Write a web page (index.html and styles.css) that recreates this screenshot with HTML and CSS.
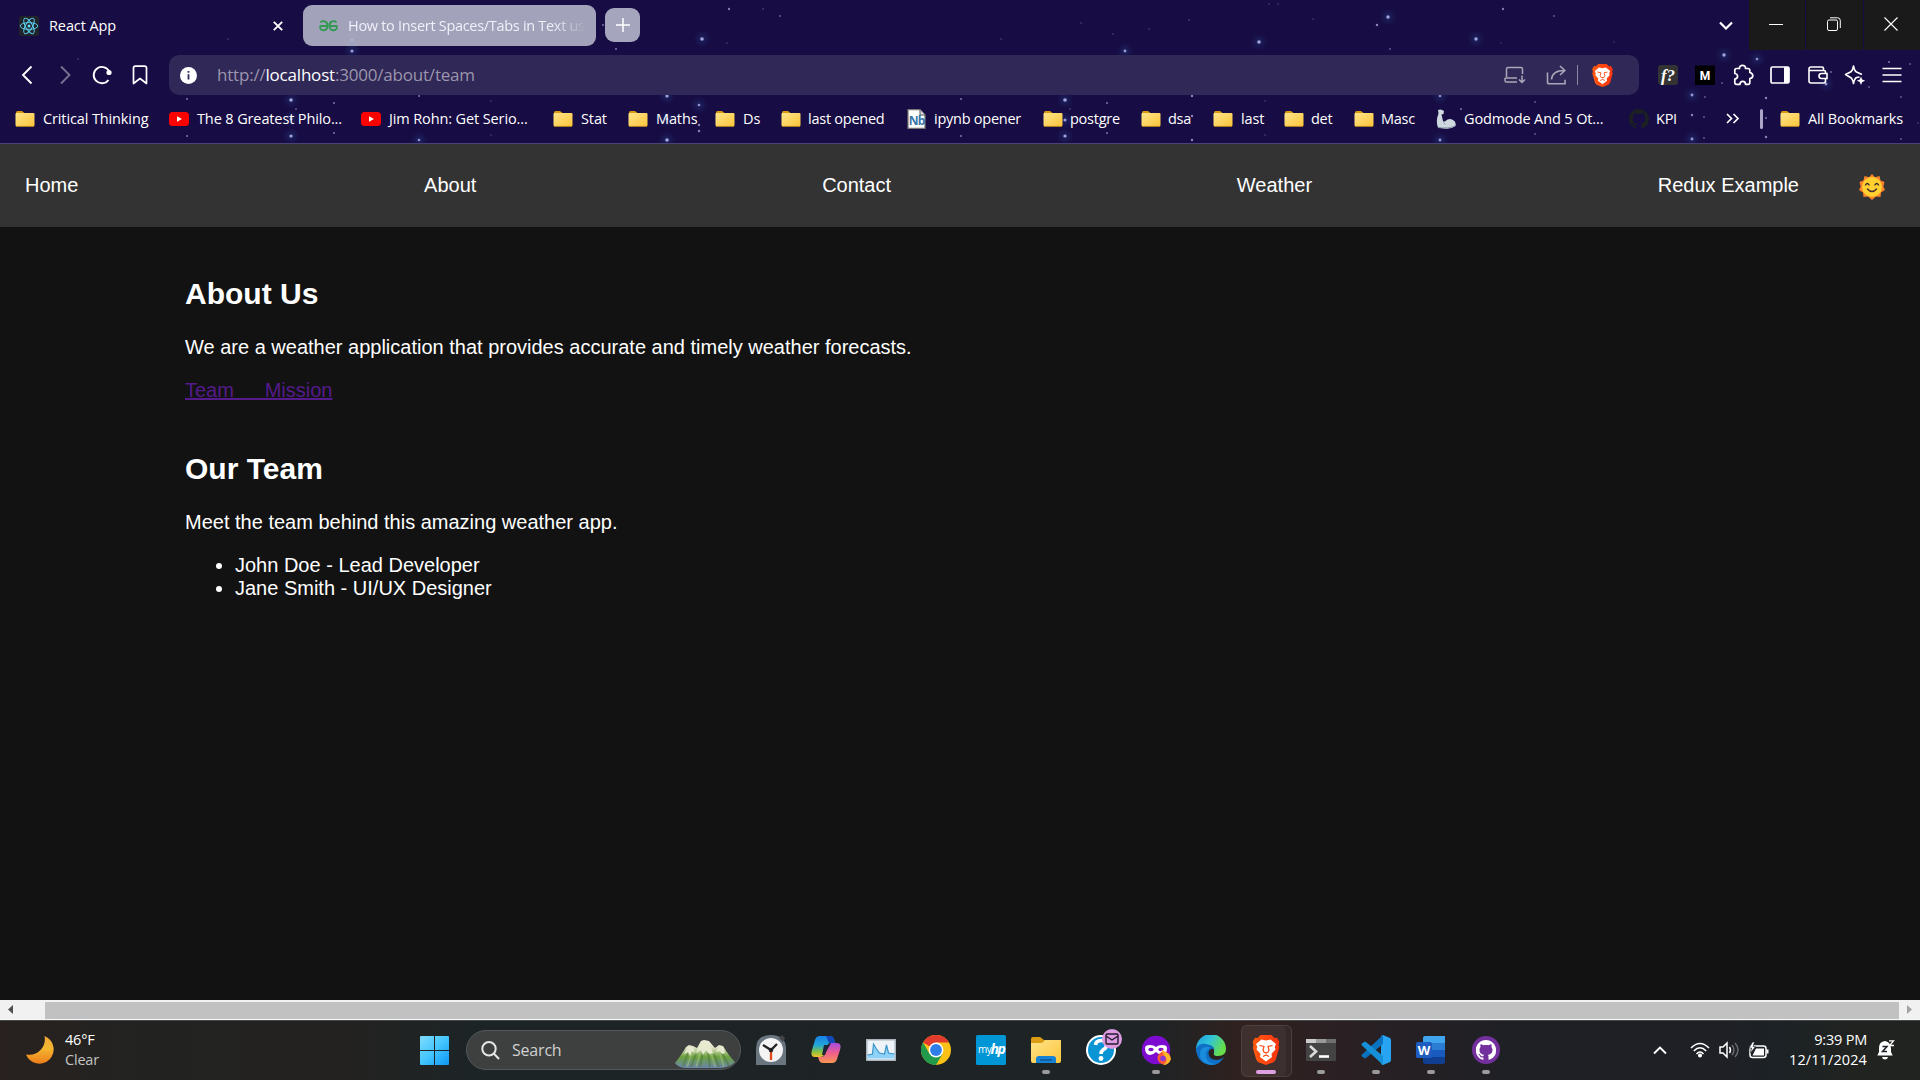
FILE: index.html
```html
<!DOCTYPE html>
<html lang="en">
<head>
<meta charset="utf-8">
<title>React App</title>
<link rel="stylesheet" href="styles.css">
</head>
<body>
<svg class="defs" width="0" height="0" aria-hidden="true">
  <defs>
    <linearGradient id="gFolder" x1="0" y1="0" x2="1" y2="1"><stop offset="0" stop-color="#ffe48a"/><stop offset="1" stop-color="#fcc53a"/></linearGradient>
    <linearGradient id="gBrave" x1="0" y1="0" x2="1" y2="0"><stop offset="0" stop-color="#ff5a10"/><stop offset="1" stop-color="#fb3310"/></linearGradient>
    <linearGradient id="gWin" gradientUnits="userSpaceOnUse" x1="0" y1="0" x2="29" y2="29"><stop offset="0" stop-color="#80dcff"/><stop offset=".5" stop-color="#43c5fd"/><stop offset="1" stop-color="#0e96f5"/></linearGradient>
    <linearGradient id="gMoon" x1="0" y1="0" x2="0" y2="1"><stop offset="0" stop-color="#f5a53a"/><stop offset=".45" stop-color="#f3b72f"/><stop offset="1" stop-color="#ee7c1c"/></linearGradient>
    <radialGradient id="gStar"><stop offset="0" stop-color="#3a78d0" stop-opacity=".22"/><stop offset="1" stop-color="#2a5ab0" stop-opacity="0"/></radialGradient>
    <symbol id="folder" viewBox="0 0 20 16"><path d="M1 1.500Q1 0 2.500 0H7l2.500 2H18v6H1z" fill="#d99a12"/><path d="M0.500 3Q.5 2 1.500 2H18.500Q19.500 2 19.500 3V14Q19.500 15.500 18 15.500H2Q.5 15.500.5 14z" fill="url(#gFolder)"/><path d="M1 15.400H19" stroke="#b98718" stroke-width=".8"/></symbol>
    <symbol id="yt" viewBox="0 0 20 14"><rect width="20" height="14" rx="3.500" fill="#f00"/><path d="M8 4.200L13 7l-5 2.800z" fill="#fff"/></symbol>
    <symbol id="lion" viewBox="0 0 27 30"><path d="M8 0H19L22 3l2.500-.3L27 7l-1 3 .8 2.500-3.500 12Q22.500 26.500 20.500 27.500L13.500 30 6.500 27.500Q4.500 26.500 3.700 24.500L.2 12.500 1 10 0 7 2.500 2.700 5 3z" fill="url(#gBrave)"/><path d="M9 4.500l4.500 1 4.500-1L23.500 9l-1.300 3 .8 2.500-4 4.300L19.500 22 13.500 26.500 7.500 22l.5-3.200-4-4.300.8-2.500L3.500 9z" fill="#fff"/><path d="M7 10.500l4.500 1-1 3.500 1.500 3M20 10.500l-4.500 1 1 3.500-1.500 3M10.500 21.500L13.500 20l3 1.500" fill="none" stroke="#fb4a18" stroke-width="1.200"/><path d="M11.800 17h3.400l-1.700 2z" fill="#fb4a18"/></symbol>
    <symbol id="cat" viewBox="0 0 16 16"><path fill-rule="evenodd" d="M8 0C3.580 0 0 3.580 0 8c0 3.540 2.290 6.530 5.470 7.590.4.070.55-.17.55-.38 0-.19-.01-.82-.01-1.490-2.010.37-2.530-.49-2.690-.94-.09-.23-.48-.94-.82-1.130-.28-.15-.68-.52-.01-.53.63-.01 1.080.58 1.230.82.72 1.210 1.870.87 2.330.66.070-.52.280-.87.510-1.070-1.780-.2-3.640-.89-3.640-3.950 0-.87.310-1.590.82-2.150-.08-.2-.36-1.020.08-2.120 0 0 .67-.21 2.200.82.640-.18 1.320-.27 2-.27s1.360.09 2 .27c1.530-1.040 2.200-.82 2.200-.82.440 1.100.160 1.920.080 2.120.510.560.820 1.270.820 2.150 0 3.070-1.870 3.750-3.650 3.950.290.250.540.730.540 1.480 0 1.070-.01 1.930-.01 2.200 0 .210.150.460.550.380A8.010 8.010 0 0 0 16 8c0-4.420-3.580-8-8-8z"/></symbol>
  </defs>
</svg>

<header class="browser">
  <svg class="sky" id="sky" width="1920" height="143" aria-hidden="true"></svg>
  <div class="tabs">
    <div class="tab active">
      <svg width="20" height="20" viewBox="0 0 20 20"><rect width="20" height="20" rx="2" fill="#20232a"/><g fill="none" stroke="#61dafb" stroke-width=".9"><ellipse cx="10" cy="10" rx="8.800" ry="3.400"/><ellipse cx="10" cy="10" rx="8.800" ry="3.400" transform="rotate(60 10 10)"/><ellipse cx="10" cy="10" rx="8.800" ry="3.400" transform="rotate(120 10 10)"/></g><circle cx="10" cy="10" r="1.500" fill="#61dafb"/></svg>
      <span class="tab-title">React App</span>
      <svg class="close" width="10" height="10" viewBox="0 0 10 10"><path d="M.8.8l8.400 8.400M9.200.8L.8 9.200" stroke="#fff" stroke-width="1.900"/></svg>
    </div>
    <div class="tab idle">
      <svg width="19" height="12" viewBox="0 0 19 12"><g fill="none" stroke="#2f9a50" stroke-width="1.900"><path d="M.5 6H8.500C9 1 3 0 1.500 2.500M8.500 6C8.500 11 1.500 12 1 7"/><path d="M18.500 6H10.500C10 1 16 0 17.500 2.500M10.500 6C10.500 11 17.500 12 18 7"/></g></svg>
      <span class="tab-title">How to Insert Spaces/Tabs in Text us</span>
    </div>
    <div class="new-tab"><svg width="14" height="14" viewBox="0 0 14 14"><path d="M7 0v14M0 7h14" stroke="#fff" stroke-width="1.500"/></svg></div>
    <svg class="tab-search" width="14" height="9" viewBox="0 0 14 9"><path d="M1 1.500l6 6 6-6" fill="none" stroke="#fff" stroke-width="2.200"/></svg>
    <div class="win-buttons">
      <span><svg width="14" height="14" viewBox="0 0 14 14"><path d="M0 7.500h14" stroke="#fff"/></svg></span>
      <span><svg width="14" height="14" viewBox="0 0 14 14" fill="none" stroke="#fff"><rect x=".5" y="3" width="10" height="10.500" rx="1.500"/><path d="M3 .8h7.500Q13.300.8 13.300 3.500V11"/></svg></span>
      <span><svg width="14" height="14" viewBox="0 0 14 14"><path d="M.5.5l13 13M13.500.5l-13 13" stroke="#fff" stroke-width="1.100"/></svg></span>
    </div>
  </div>

  <div class="toolbar">
    <div class="nav-icons">
      <svg width="20" height="20" viewBox="0 0 20 20"><path d="M14.500 1.500L6 10l8.500 8.500" fill="none" stroke="#fff" stroke-width="1.900"/></svg>
      <svg width="20" height="20" viewBox="0 0 20 20"><path d="M6 1.500L14.500 10 6 18.500" fill="none" stroke="#77718f" stroke-width="1.900"/></svg>
      <svg width="20" height="20" viewBox="0 0 20 20"><path d="M16.500 15A8.200 8.200 0 1 1 17.500 7" fill="none" stroke="#fff" stroke-width="1.900"/><circle cx="17" cy="7.500" r="2.600" fill="#fff"/></svg>
      <svg width="20" height="20" viewBox="0 0 20 20"><path d="M3.500 3Q3.500 1.200 5.300 1.200H14.700Q16.500 1.200 16.500 3V18.500L10 13.500 3.500 18.500z" fill="none" stroke="#fff" stroke-width="1.700" stroke-linejoin="round"/></svg>
    </div>
    <div class="address">
      <svg width="17" height="17" viewBox="0 0 17 17"><circle cx="8.500" cy="8.500" r="8.500" fill="#fff"/><path d="M8.500 7.300v5.200M8.500 4v1.800" stroke="#302856" stroke-width="1.800"/></svg>
      <span class="url">http://<b>localhost</b>:3000/about/team</span>
      <div class="address-actions">
        <svg width="22" height="18" viewBox="0 0 22 18" fill="none" stroke="#aaa5b8" stroke-width="1.500"><path d="M2.500 11V3Q2.500 1.500 4 1.500H17Q18.500 1.500 18.500 3V8M1 12h12M1 12v2.500Q1 16 2.500 16H13M18 9.500v6.500M15 13.500l3 3 3-3"/></svg>
        <svg width="21" height="20" viewBox="0 0 21 20" fill="none" stroke="#aaa5b8" stroke-width="1.600"><path d="M1.500 7.500V17Q1.500 18.800 3.300 18.800H19v-4M5.500 14.500C6 8.500 10 5.500 18.500 5.500M14 1l4.800 4.500L14 10"/></svg>
        <i class="divider"></i>
        <svg width="21" height="23"><use href="#lion"/></svg>
      </div>
    </div>
    <div class="extensions">
      <svg width="22" height="22" viewBox="0 0 22 22"><rect x="1" y="1" width="20" height="20" rx="3" fill="#333"/><text x="11" y="16.500" text-anchor="middle" class="t-f">f?</text></svg>
      <svg width="22" height="22" viewBox="0 0 22 22"><rect x="1" y="1.500" width="20" height="19.500" fill="#000"/><text x="11" y="15.500" text-anchor="middle" class="t-m">M</text></svg>
      <svg width="22" height="22" viewBox="0 0 22 22"><path d="M4.500 4.500H7.500C7 .3 14 .3 13.500 4.500H16Q17.800 4.500 17.800 6.300V8.500C21.800 9.500 21.800 14 17.800 14.500V18.700Q17.800 20.300 16 20.300H13.500C13.500 16.500 8 16.500 8 20.300H4.500Q2.800 20.300 2.800 18.500V15C6.500 14.500 6.500 10 2.800 9.500V6.300Q2.800 4.500 4.500 4.500z" fill="none" stroke="#fff" stroke-width="1.700" stroke-linejoin="round"/></svg>
      <svg width="22" height="22" viewBox="0 0 22 22"><rect x="2" y="3" width="18" height="16" rx="1.500" fill="none" stroke="#fff" stroke-width="1.700"/><path d="M15 3h5v16h-5z" fill="#fff"/></svg>
      <svg width="22" height="22" viewBox="0 0 22 22" fill="none" stroke="#fff" stroke-width="1.600"><path d="M18.500 10V8Q18.500 6.500 17 6.500H2M16.500 6.500V4.500Q16.500 3 15 3H4Q2 3 2 5V17Q2 19 4 19H16.500Q18.500 19 18.500 17V15"/><path d="M20 9.500H14.500Q12 9.500 12 12T14.500 14.500H20z"/></svg>
      <svg width="22" height="22" viewBox="0 0 22 22"><path d="M15.500 13L12.500 13.500Q10.500 14.500 9.500 19.500 8.500 14.500 6.500 13.500L1.500 10.500 6.500 8Q8.500 7 9.500 2 10.500 7 12.500 8L18 10.500" fill="none" stroke="#fff" stroke-width="1.600" stroke-linejoin="round"/><path d="M17 12.500l1.200 3 3 1.200-3 1.200-1.200 3-1.200-3-3-1.200 3-1.200z" fill="#fff"/></svg>
      <svg width="22" height="22" viewBox="0 0 22 22"><path d="M1.500 4.500h19M1.500 11h19M1.500 17.500h19" stroke="#fff" stroke-width="1.700"/></svg>
    </div>
  </div>

  <div class="bookmarks">
    <span class="bm"><svg width="20" height="16"><use href="#folder"/></svg>Critical Thinking</span>
    <span class="bm"><svg width="20" height="14"><use href="#yt"/></svg>The 8 Greatest Philo...</span>
    <span class="bm"><svg width="20" height="14"><use href="#yt"/></svg>Jim Rohn: Get Serio...</span>
    <span class="bm"><svg width="20" height="16"><use href="#folder"/></svg>Stat</span>
    <span class="bm"><svg width="20" height="16"><use href="#folder"/></svg>Maths</span>
    <span class="bm"><svg width="20" height="16"><use href="#folder"/></svg>Ds</span>
    <span class="bm snug"><svg width="20" height="16"><use href="#folder"/></svg>last opened</span>
    <span class="bm snug"><svg width="20" height="20" viewBox="0 0 20 20"><path d="M1 .7H13L18 6V19.300H1z" fill="#fff" stroke="#777" stroke-width="1.200"/><path d="M13 .7V6h5" fill="#ddd" stroke="#555"/><text x="9.700" y="16" text-anchor="middle" class="t-nb">Nb</text></svg>ipynb opener</span>
    <span class="bm snug"><svg width="20" height="16"><use href="#folder"/></svg>postgre</span>
    <span class="bm snug"><svg width="20" height="16"><use href="#folder"/></svg>dsa</span>
    <span class="bm"><svg width="20" height="16"><use href="#folder"/></svg>last</span>
    <span class="bm snug"><svg width="20" height="16"><use href="#folder"/></svg>det</span>
    <span class="bm snug"><svg width="20" height="16"><use href="#folder"/></svg>Masc</span>
    <span class="bm"><svg width="20" height="20" viewBox="0 0 20 20"><path d="M2 1Q5-.5 8 2L7.500 5 5.500 5.500 7 12Q8 13 9.500 12 13 8.500 17 11 20.500 13 19.500 17 15 20.500 8 19.500L2 18.500Q-.5 12 2.500 4.500z" fill="#cdd9df"/><path d="M7.500 13.500l2 2M2 18.500Q12 20 19 17" stroke="#8799a3" fill="none"/></svg>Godmode And 5 Ot...</span>
    <span class="bm snug"><svg width="20" height="20" fill="#1b2023"><use href="#cat"/></svg>KPI</span>
    <svg width="14" height="11" viewBox="0 0 14 11"><path d="M1 1l4.500 4.500L1 10M7.500 1L12 5.500 7.500 10" fill="none" stroke="#fff" stroke-width="1.700"/></svg>
    <i class="bm-divider"></i>
    <span class="bm"><svg width="20" height="16"><use href="#folder"/></svg>All Bookmarks</span>
  </div>
</header>

<main class="page">
  <nav class="site-nav">
    <div class="links"><a>Home</a><a>About</a><a>Contact</a><a>Weather</a><a>Redux Example</a></div>
    <svg class="sun" width="26" height="26" viewBox="0 0 26 26"><path d="M13 0l3 3.300 4.500-1.300 1 4.500L25.500 8l-1.200 4.500L26 16l-4 2.500-.5 4.500-4.500-.5L13 26l-4-3.500-4.500.5L4 18.500 0 16l1.700-3.500L.5 8l4-1.500 1-4.500L10 3.300z" fill="#ff822d"/><circle cx="13" cy="13" r="10" fill="#ffd02f"/><path d="M6.500 11q1.800-3 3.600 0M15.900 11q1.800-3 3.600 0M8.500 15q4.500 5 9 0" fill="none" stroke="#402a32" stroke-width="1.400" stroke-linecap="round"/></svg>
  </nav>
  <section class="content">
    <h2>About Us</h2>
    <p>We are a weather application that provides accurate and timely weather forecasts.</p>
    <a class="sublinks">Team&nbsp;&nbsp;&nbsp;&nbsp;&nbsp;Mission</a>
    <h2 class="team">Our Team</h2>
    <p>Meet the team behind this amazing weather app.</p>
    <ul><li>John Doe - Lead Developer</li><li>Jane Smith - UI/UX Designer</li></ul>
  </section>
</main>

<div class="scrollbar">
  <svg width="21" height="18" viewBox="0 0 21 18"><path d="M13 4v9L8 8.500z" fill="#505050"/></svg>
  <div class="thumb"></div>
  <svg width="21" height="18" viewBox="0 0 21 18"><path d="M8 4v9l5-4.500z" fill="#a3a3a3"/></svg>
</div>

<footer class="taskbar">
  <div class="weather">
    <svg width="28" height="28" viewBox="0 0 28 28"><path d="M18.500 0A14.300 14.300 0 1 1 0 18.500Q9 20 15 13.500 20 8 18.500 0z" fill="url(#gMoon)"/></svg>
    <div><div>46°F</div><div class="dim">Clear</div></div>
  </div>
  <div class="center">
    <svg class="start" width="29" height="29" viewBox="0 0 29 29" fill="url(#gWin)"><path d="M0 1Q0 0 1 0H14V14H0zM15 0H28Q29 0 29 1V14H15zM0 15H14V29H1Q0 29 0 28zM15 15H29V28Q29 29 28 29H15z"/></svg>
    <div class="search">
      <svg width="19" height="19" viewBox="0 0 19 19" fill="none" stroke="#e6e6e6" stroke-width="2"><circle cx="8" cy="7.800" r="6.700"/><path d="M12.800 12.500l5.200 5.500"/></svg>
      <span>Search</span>
      <svg class="mountains" width="60" height="28" viewBox="0 0 60 28">
        <defs><linearGradient id="gMt" x1="0" y1="0" x2="0" y2="1"><stop offset="0" stop-color="#f3f0df"/><stop offset=".28" stop-color="#dfe2c4"/><stop offset=".6" stop-color="#6da23f"/><stop offset="1" stop-color="#6a83ad"/></linearGradient></defs>
        <path d="M0 23Q7 14 11 7L14 5 18 6 22 8 26 1 29 0 34 1 40 8 44 5 48 6Q54 16 60 22 56 27 46 28H12Q3 28 0 23z" fill="url(#gMt)"/>
        <path d="M13 13l-5 13M21 14l-5 13M28 12l-3 15M33 12l2 15M39 14l5 13M47 13l7 13" stroke="#47752f" stroke-width="2" opacity=".5"/><path d="M17 13l-5 14M25 14l-4 13M36 13l4 14M45 14l4 13" stroke="#a9c979" stroke-width="1.500" opacity=".5"/><path d="M26 2l-5 11 5-3 2 5 3-5 3 4 4-1-4-11zM13 7l-4 7 4-2 2 4 2-5 3 2-2-6zM44 7l-3 5 4-1 2 3 3-1-2-6z" fill="#e8ead0"/>
      </svg>
    </div>
    <div class="apps">
      <span class="app"><svg viewBox="0 0 30 30"><path d="M0 14Q0 0 15 0T30 14V30H0z" fill="#697680"/><path d="M23 3l3-3 3 3-2 4z" fill="#454545"/><circle cx="15" cy="15" r="12" fill="#f4f4f4"/><path d="M7 10l8 5 6-6" fill="none" stroke="#222" stroke-width="2.300"/><path d="M15 15v10" stroke="#e04716" stroke-width="2.300"/><circle cx="15" cy="15" r="2.300" fill="#222"/></svg></span>
      <span class="app"><svg viewBox="0 0 30 30"><defs><linearGradient id="gC1" x1="0" y1="0" x2="0" y2="1"><stop offset="0" stop-color="#1781e8"/><stop offset=".45" stop-color="#24a8d5"/><stop offset=".75" stop-color="#86c33f"/><stop offset="1" stop-color="#f5c12b"/></linearGradient><linearGradient id="gC2" x1="0" y1="0" x2="0" y2="1"><stop offset="0" stop-color="#a74bdf"/><stop offset=".5" stop-color="#ee5f8d"/><stop offset="1" stop-color="#fa9550"/></linearGradient></defs><path d="M9 1H19Q22 1 23 4L24 8H20Q17 8 16 11L13 20Q12 22 9 22H4Q-1 22 1 15L4 5Q5 1 9 1z" fill="url(#gC1)"/><path d="M15 1H19Q22 1 23 4L24 8H18z" fill="#1447b7"/><path d="M20 8H26Q31 8 29 15L26 24Q25 28 21 28H12Q9 28 8 25L7 22H10Q13 22 14 19z" fill="url(#gC2)"/><path d="M13 10h4l-3 10h-3z" fill="#20263a"/></svg></span>
      <span class="app"><svg viewBox="0 0 30 30"><path d="M0 4H30V26H0z" fill="#a9b4bd"/><path d="M1.500 5.500H28.500V24.500H1.500z" fill="#eef3f7"/><path d="M1.500 20l5-1 1-10 3 5 3 4 5 1 2-9 2 8 6 1v4.500H1.500z" fill="#8ed2f8"/><path d="M1.500 20l5-1 1-10 3 5 3 4 5 1 2-9 2 8 6 1" fill="none" stroke="#3b94c9" stroke-width="1.200"/></svg></span>
      <span class="app"><svg viewBox="0 0 30 30"><circle cx="15" cy="15" r="15" fill="#fbc116"/><path d="M15 15L2 7.500A15 15 0 0 1 28 7.500H15z" fill="#e33b2e"/><path d="M2 7.500A15 15 0 0 0 15 30L21.500 18.800 8.500 18.800z" fill="#229a4b"/><circle cx="15" cy="15" r="7.400" fill="#fff"/><circle cx="15" cy="15" r="5.900" fill="#2f7de9"/></svg></span>
      <span class="app"><svg viewBox="0 0 30 30"><rect width="30" height="30" rx="1.500" fill="#0096d6"/><text x="2" y="17.500" class="t-my">my</text><text x="14.500" y="18.500" class="t-hp">hp</text></svg></span>
      <span class="app run"><svg viewBox="0 0 30 30"><path d="M0 4Q0 2 2 2H9L13 5H30V12H0z" fill="#dc9c13"/><path d="M0 8H11L14 5H29Q30 5 30 6V26Q30 28 28 28H2Q0 28 0 26z" fill="url(#gFolder)"/><path d="M5 28V24Q5 21 8 21H22Q25 21 25 24V28z" fill="#1682d4"/><path d="M9 25h12" stroke="#0d5698" stroke-width="1.500"/></svg></span>
      <span class="app"><svg viewBox="0 0 30 30"><circle cx="15" cy="15" r="14" fill="#0a94d4" stroke="#fff" stroke-width="2"/><path d="M9.500 10Q10 5.500 15 5.500 20.500 5.500 20.500 10 20.500 13 17.500 14.500 15 16 15 19" fill="none" stroke="#fff" stroke-width="3.600"/><circle cx="15" cy="23.500" r="2.400" fill="#fff"/></svg><i class="badge"><svg width="14" height="12" viewBox="0 0 14 12" fill="none" stroke="#251a2a" stroke-width="1.400"><rect x="1" y="1" width="12" height="10" rx="1"/><path d="M1 3l6 4 6-4"/></svg></i></span>
      <span class="app run"><svg viewBox="0 0 30 30"><circle cx="15" cy="15" r="14.300" fill="#7e0bd0"/><path d="M4 13Q4 10 9 10 13 10 15 12 17 10 21 10 26 10 26 13 26 20 21 20 18 20 15 17 12 20 9 20 4 20 4 13z" fill="#fff"/><ellipse cx="10" cy="14.500" rx="2.700" ry="1.800" fill="#7e0bd0"/><ellipse cx="20" cy="14.500" rx="2.700" ry="1.800" fill="#7e0bd0"/><circle cx="23" cy="23" r="6.500" fill="#ff5a36"/><path d="M20 14Q24 17 28 19L30 24Q28 30 22 30 28 26 24 22z" fill="#ffb52b"/><circle cx="22" cy="23.500" r="2.800" fill="#8a3ad5"/></svg></span>
      <span class="app"><svg viewBox="0 0 30 30"><defs><linearGradient id="gE" x1="0" y1="0" x2="1" y2=".4"><stop offset="0" stop-color="#1c9ce0"/><stop offset=".5" stop-color="#31c4d8"/><stop offset="1" stop-color="#66de4b"/></linearGradient></defs><path d="M0 14A15 15 0 0 1 30 14Q30 21 22 21 17 21 18 18 19 10 11 10 3 10 0 17z" fill="url(#gE)"/><path d="M0 14Q3 8 10 9 17 10 18.500 14 14 13 12.500 17 12 25 21 25 25 25 28 22 23 31 14 30 1 28 0 14z" fill="#0f6fc6"/><path d="M12.500 14Q9 17 10 22 12 29 20 29 13 31 7 27 2 21 5 15 8 11 14 12z" fill="#1a8cdc"/></svg></span>
      <span class="app run current"><svg viewBox="0 0 30 30"><use href="#lion" x="1.500" y="0" width="27" height="30"/></svg></span>
      <span class="app run"><svg viewBox="0 0 30 30"><path d="M0 5Q0 4 1 4H29Q30 4 30 5V26H0z" fill="#444"/><path d="M0 4H10V8H0z" fill="#ccc"/><path d="M10 4H20V8H10z" fill="#999"/><path d="M20 4H30V8H20z" fill="#707070"/><path d="M4 11l6 5.500L4 22" fill="none" stroke="#dcdcdc" stroke-width="2.600"/><path d="M13 21.500h10" stroke="#fff" stroke-width="2.600"/></svg></span>
      <span class="app run"><svg viewBox="0 0 30 30"><path d="M22 0L29 3Q30 4 30 5V25Q30 26 29 27L22 30 20 29V1z" fill="#27a4f2"/><path d="M22 0L1 19.500Q0 20.500 1 21.500L3 23Q4 23.500 5 23L22 9z" fill="#0b72bf"/><path d="M22 30L1 10.500Q0 9.500 1 8.500L3 7Q4 6.500 5 7L22 21z" fill="#168fd9"/></svg></span>
      <span class="app run"><svg viewBox="0 0 30 30"><path d="M7 3Q7 1 9 1H29V8H7z" fill="#41a5ee"/><path d="M7 8H29V15H7z" fill="#2b7cd3"/><path d="M7 15H29V22H7z" fill="#185abd"/><path d="M7 22H29V27Q29 29 27 29H9Q7 29 7 27z" fill="#103f91"/><rect y="7" width="16" height="16" rx="1.500" fill="#1f5cc0"/><text x="8" y="19.500" text-anchor="middle" class="t-w">W</text></svg></span>
      <span class="app run"><svg viewBox="0 0 30 30"><circle cx="15" cy="15" r="14" fill="#73309d"/><g transform="translate(4.800 5) scale(1.270)" fill="#fff"><use href="#cat" width="16" height="16"/></g></svg></span>
    </div>
  </div>
  <div class="tray">
    <svg width="14" height="9" viewBox="0 0 14 9"><path d="M1 7.500l6-6 6 6" fill="none" stroke="#fff" stroke-width="1.900"/></svg>
    <svg class="wifi" width="20" height="16" viewBox="0 0 20 16" fill="none" stroke="#fff" stroke-width="1.500"><path d="M1 6Q10-3 19 6M3.800 9Q10 2.500 16.200 9M6.500 12Q10 8 13.500 12"/><circle cx="10" cy="13.500" r="1.300" fill="#fff"/></svg>
    <svg class="snd" width="21" height="18" viewBox="0 0 21 18" fill="none" stroke="#fff" stroke-width="1.500"><path d="M1 6H4L8 2V16L4 12H1zM10.500 6Q12.500 9 10.500 12"/><path d="M13 4Q17 9 13 14M16 2Q22 9 16 16" stroke="#666a70"/></svg>
    <svg class="bat" width="20" height="17" viewBox="0 0 20 17"><rect x="1" y="4" width="16" height="11.500" rx="2.500" fill="none" stroke="#fff" stroke-width="1.500"/><path d="M3.500 13.500L7 6.500h8v7zM17.500 7.500h2v4h-2z" fill="#fff"/><path d="M3.500 0L0 6h2.500L1.500 11l5-6.500H4L5.500 0z" fill="#fff" stroke="#1e2225" stroke-width=".6"/></svg>
    <div class="clock"><div>9:39 PM</div><div class="date">12/11/2024</div></div>
    <svg class="bell" width="18" height="20" viewBox="0 0 18 20"><path d="M8 1Q2 1.500 2 8V12L.3 15.500H15.700L14 12V8Q13 1.500 8 1z" fill="#fff"/><path d="M5 17H11Q10.500 19.500 8 19.500T5 17z" fill="#fff"/><path d="M5.500 6.500h4.500l-4.500 5H10" fill="none" stroke="#1e2225" stroke-width="1.500"/><path d="M12 .8h4.500L12.500 5.500H17" fill="none" stroke="#fff" stroke-width="1.300"/></svg>
  </div>
</footer>
<script src="stars.js"></script>
</body>
</html>
```
FILE: stars.js
```js
// Theme background: [x, y, radius]; bright stars also get a halo.
const stars = [
  [352,22,1.2],[352,40,1.5],[352,51,1.7],[228,39,.8],[78,59,.8],[187,99,1.2],[291,100,2],[296,109,1],[291,119,1.6],[334,103,1.2],[334,133,1.2],[291,136,1.8],[187,136,1.2],
  [419,96,1.2],[419,140,1.5],[491,101,.8],[491,135,.8],[616,49,1.2],[603,25,1.2],[729,9,1.3],[763,9,.9],[780,16,1],[702,39,2],[727,43,.8],[1001,39,.8],
  [1081,23,.8],[1125,51,1.6],[1113,34,.8],[1149,29,.8],[1189,20,.9],[1259,42,2],[1269,4,.8],[1278,4,.8],[667,96,1.8],[699,105,1.5],[699,125,1.4],[699,131,1.4],
  [667,119,1.5],[667,140,2],[961,99,1.2],[961,136,1.2],[1065,100,2],[1065,120,1.7],[1065,136,1.8],[1107,103,1.2],[1107,133,1.2],[1107,123,1.2],[1070,109,.9],[1192,96,1.4],[1192,116,1.4],
  [1192,140,1.4],[1265,101,.8],[1265,135,.8],[1388,17,1.9],[1377,25,1.4],[1313,19,.8],[1390,49,1],[1476,39,1.9],[1503,9,1.3],[1554,16,1],[1501,43,.7],[1614,42,.7],
  [1724,55,1.9],[1757,59,1.5],[1722,83,1],[1692,95,1.6],[1705,97,1],[1692,115,1.4],[1704,117,1],[1692,139,1.6],[1704,138,1],[1831,72,1.1],[1826,84,1.6],[1889,62,1.2],
  [1910,64,1],[1869,87,1],[1766,98,1.4],[1901,97,1],[1766,118,1.2],[1766,137,1.4],[1901,139,1],[1918,123,.8],[1440,96,1.5],[1440,140,1.6],[1461,109,1.2],[1535,102,1],[1535,134,1]
];
document.getElementById("sky").innerHTML = stars.map(([x, y, r]) =>
  (r >= 1.5 ? `<circle cx="${x}" cy="${y}" r="9" fill="url(#gStar)"/>` : "") +
  `<circle cx="${x}" cy="${y}" r="${r * .9}" fill="#b9bdf0" opacity="${Math.min(.85, r * .48)}"/>`
).join("");
```
FILE: styles.css
```css
* { box-sizing: border-box; }
body { margin: 0; width: 1920px; height: 1080px; overflow: hidden; display: flex; flex-direction: column; background: #121212; color: #fff; font-family: "Open Sans", "Noto Sans", sans-serif; }
svg { display: block; flex: none; }
.defs { position: absolute; }

.browser { position: relative; height: 144px; background: #170c43; border-bottom: 1px solid #4b4374; flex: none; }
.sky { position: absolute; left: 0; top: 0; }
.tabs, .toolbar, .bookmarks { position: relative; }

.tabs { height: 51px; display: flex; align-items: flex-start; font-size: 14.5px; letter-spacing: -.3px; }
.tab { display: flex; align-items: center; height: 41px; margin-top: 5px; }
.tab.active { width: 303px; padding: 0 20px 0 19px; letter-spacing: -.1px; }
.tab-title { white-space: nowrap; overflow: hidden; }
.active .tab-title { margin-left: 10px; flex: 1; }
.idle { width: 293px; padding: 0 10px 0 16px; border-radius: 9px; background: rgba(190, 192, 210, .84); }
.idle .tab-title { margin-left: 10px; color: #f0f0fa; flex: 1; -webkit-mask-image: linear-gradient(90deg, #000 86%, transparent); mask-image: linear-gradient(90deg, #000 86%, transparent); }
.new-tab { width: 35px; height: 34px; margin: 8px 0 0 9px; border-radius: 9px; background: #a5a6bd; display: grid; place-items: center; }
.tab-search { margin: 21px 0 0 1079px; }
.win-buttons { display: grid; grid-template-columns: 56px 57px 56px; gap: 1px; margin-left: auto; height: 50px; }
.win-buttons span { background: #1a1a1a; display: grid; place-items: center; padding: 0 2px 2px 0; }

.toolbar { height: 48px; padding-top: 4px; display: flex; }
.nav-icons { width: 169px; height: 40px; padding-left: 17px; display: flex; align-items: center; gap: 17.6px; }
.address { width: 1470px; height: 40px; border-radius: 10px; background: #302856; display: flex; align-items: center; padding: 0 26px 0 11px; }
.url { margin: -2px 0 0 20px; font-size: 17px; letter-spacing: -.2px; color: #9b96ad; white-space: nowrap; }
.url b { font-weight: 400; color: #fff; }
.address-actions { margin-left: auto; display: flex; align-items: center; }
.address-actions svg:nth-child(2) { margin-left: 20px; }
.divider { width: 1px; height: 20px; background: #8d88a0; margin: 0 14px 0 10px; }
.extensions { height: 40px; margin-left: 18px; display: flex; align-items: center; gap: 15.4px; }
.t-f { font: italic bold 17px "Liberation Serif", serif; fill: #fff; }
.t-m { font: bold 12px Roboto, sans-serif; fill: #fff; }

.bookmarks { height: 40px; padding-left: 15px; display: grid; grid-template-columns: 154px 192px 192px 75px 87px 66px 126px 136px 98px 72px 71px 70px 82px 193px 97px 34px 20px 1fr; align-items: center; font-size: 14.5px; letter-spacing: -.12px; white-space: nowrap; padding-bottom: 1px; }
.bm { display: flex; align-items: center; gap: 8px; }
.snug { gap: 7px; letter-spacing: -.25px; }
.bm-divider { width: 3px; height: 20px; border-radius: 2px; background: #aaa6c4; }
.t-nb { font: bold 12px "Open Sans", sans-serif; fill: #3776ab; letter-spacing: -.8px; }

.page { height: 856px; flex: none; font: 20px/23px "Liberation Sans", Arial, sans-serif; background: #121212; }
.site-nav { height: 83px; background: #333; display: flex; align-items: center; padding: 0 35px 0 25px; }
.links { width: 1774px; display: flex; justify-content: space-between; }
.sun { margin: 3px 0 0 60px; }
.content { padding: 50px 185px 0; }
h2 { font-size: 30px; line-height: 34px; margin: 0 0 25px; }
p { margin: 0 0 20px; }
.sublinks { color: #551a8b; text-decoration: underline; word-spacing: .6px; }
h2.team { margin-top: 50px; }
ul { margin: 0; padding-left: 50px; }

.scrollbar { height: 20px; flex: none; background: #f1f1f1; border-bottom: 1px solid #f8f8f8; display: flex; align-items: center; padding-top: 1px; }
.thumb { flex: 1; height: 17px; margin-left: 24px; background: #c1c1c1; }

.taskbar { position: relative; height: 60px; flex: none; display: flex; align-items: center; padding-bottom: 1px; border-top: 1px solid #46474b; background: linear-gradient(90deg, #28211f 0, #222321 150px, #242220 330px, #1d2426 470px, #1e2325 1150px, #31211f 1250px, #2b2023 1330px, #1f2025 1500px, #1f2025 1720px, #1c2225 1780px, #212320 1860px); font-size: 14.5px; line-height: 20px; letter-spacing: -.2px; }
.weather { width: 420px; padding-left: 26px; display: flex; align-items: center; gap: 11px; }
.dim { color: #c4c4c4; }
.center { display: flex; align-items: center; }
.search { width: 275px; height: 40px; margin-left: 17px; border-radius: 20px; background: #3e4040; border: 1px solid #55585a; display: flex; align-items: center; padding: 0 5px 0 14px; font-size: 16px; color: #d0d0d0; }
.search span { margin-left: 12px; flex: 1; }
.mountains { margin-top: 7px; }
.apps { display: flex; margin-left: 2px; }
.app { position: relative; width: 55px; height: 58px; display: grid; place-items: center; }
.app > svg { width: 30px; height: 30px; }
.run::after { content: ""; position: absolute; left: 24px; top: 49px; width: 8px; height: 4px; border-radius: 2px; background: #9a9a9a; }
.current::before { content: ""; position: absolute; left: 3px; top: 4px; width: 49px; height: 50px; border-radius: 6px; background: rgba(255, 255, 255, .07); border: 1px solid rgba(255, 255, 255, .08); box-shadow: inset -5px 0 0 rgba(0, 0, 0, .13); }
.current > svg { position: relative; }
.current.run::after { left: 18px; width: 20px; background: #dfa0e2; }
.badge { position: absolute; left: 29px; top: 8px; width: 20px; height: 20px; border-radius: 50%; background: #dc9be3; display: grid; place-items: center; }
.t-my { font: 10px "Open Sans", sans-serif; fill: #fff; letter-spacing: -.6px; }
.t-hp { font: italic bold 14px "Open Sans", sans-serif; fill: #fff; letter-spacing: -1.5px; }
.t-w { font: bold 13px "Open Sans", sans-serif; fill: #fff; letter-spacing: 0; }

.tray { margin-left: auto; padding-right: 25px; display: flex; align-items: center; }
.wifi { margin-left: 23px; }
.snd { margin-left: 9px; }
.bat { margin-left: 9px; }
.clock { width: 98px; text-align: right; }
.date { letter-spacing: .1px; }
.bell { margin-left: 10px; }
```
